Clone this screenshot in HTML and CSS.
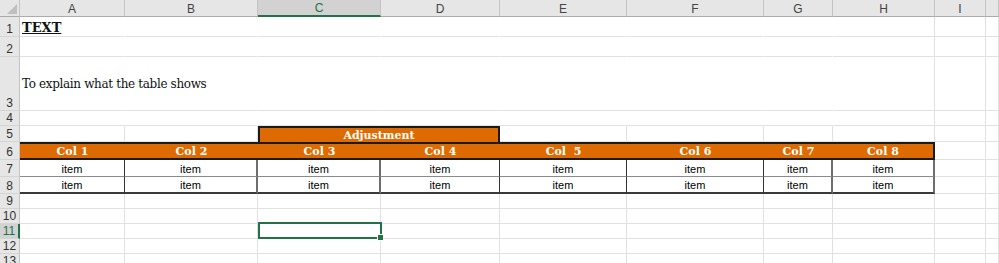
FILE: index.html
```html
<!DOCTYPE html>
<html lang="en">
<head>
    <meta charset="UTF-8">
    <title>Sheet1</title>
    <link rel="stylesheet" href="styles.css">
</head>
<body>
    <div class="sheet">
        <!-- column letters -->
        <div class="row hdr">
            <div class="c corner"><span class="tri"></span></div>
            <div class="c">A</div>
            <div class="c">B</div>
            <div class="c colsel">C</div>
            <div class="c">D</div>
            <div class="c">E</div>
            <div class="c">F</div>
            <div class="c">G</div>
            <div class="c">H</div>
            <div class="c">I</div>
            <div class="c"></div>
        </div>

        <div class="row h20 plain">
            <div class="c rowh">1</div>
            <div class="c txt title">TEXT</div>
            <div class="c"></div><div class="c"></div><div class="c"></div><div class="c"></div>
            <div class="c"></div><div class="c"></div><div class="c"></div><div class="c"></div><div class="c"></div>
        </div>
        <div class="row h20 plain">
            <div class="c rowh">2</div>
            <div class="c"></div><div class="c"></div><div class="c"></div><div class="c"></div><div class="c"></div>
            <div class="c"></div><div class="c"></div><div class="c"></div><div class="c"></div><div class="c"></div>
        </div>
        <div class="row h54 plain">
            <div class="c rowh">3</div>
            <div class="c txt mid">To explain what the table shows</div>
            <div class="c"></div><div class="c"></div><div class="c"></div><div class="c"></div>
            <div class="c"></div><div class="c"></div><div class="c"></div><div class="c"></div><div class="c"></div>
        </div>
        <div class="row h15 plain">
            <div class="c rowh">4</div>
            <div class="c"></div><div class="c"></div><div class="c"></div><div class="c"></div><div class="c"></div>
            <div class="c"></div><div class="c"></div><div class="c"></div><div class="c"></div><div class="c"></div>
        </div>

        <div class="row h16">
            <div class="c rowh">5</div>
            <div class="c"></div>
            <div class="c"></div>
            <div class="c adj">Adjustment</div>
            <div class="c"></div><div class="c"></div><div class="c"></div><div class="c"></div>
            <div class="c"></div><div class="c"></div>
        </div>

        <div class="row h18">
            <div class="c rowh">6</div>
            <div class="c th">Col 1</div>
            <div class="c th">Col 2</div>
            <div class="c th">Col 3</div>
            <div class="c th">Col 4</div>
            <div class="c th">Col&nbsp; 5</div>
            <div class="c th">Col 6</div>
            <div class="c th">Col 7</div>
            <div class="c th last">Col 8</div>
            <div class="c"></div><div class="c"></div>
        </div>

        <div class="row h17 data">
            <div class="c rowh">7</div>
            <div class="c td">item</div><div class="c td">item</div><div class="c td">item</div><div class="c td">item</div>
            <div class="c td">item</div><div class="c td">item</div><div class="c td">item</div><div class="c td">item</div>
            <div class="c"></div><div class="c"></div>
        </div>
        <div class="row h17 data lastrow">
            <div class="c rowh">8</div>
            <div class="c td">item</div><div class="c td">item</div><div class="c td">item</div><div class="c td">item</div>
            <div class="c td">item</div><div class="c td">item</div><div class="c td">item</div><div class="c td">item</div>
            <div class="c"></div><div class="c"></div>
        </div>

        <div class="row h15">
            <div class="c rowh">9</div>
            <div class="c"></div><div class="c"></div><div class="c"></div><div class="c"></div><div class="c"></div>
            <div class="c"></div><div class="c"></div><div class="c"></div><div class="c"></div><div class="c"></div>
        </div>
        <div class="row h15">
            <div class="c rowh">10</div>
            <div class="c"></div><div class="c"></div><div class="c"></div><div class="c"></div><div class="c"></div>
            <div class="c"></div><div class="c"></div><div class="c"></div><div class="c"></div><div class="c"></div>
        </div>
        <div class="row h15">
            <div class="c rowh rowsel">11</div>
            <div class="c"></div><div class="c"></div>
            <div class="c active"></div>
            <div class="c"></div><div class="c"></div>
            <div class="c"></div><div class="c"></div><div class="c"></div><div class="c"></div><div class="c"></div>
        </div>
        <div class="row h15">
            <div class="c rowh">12</div>
            <div class="c"></div><div class="c"></div><div class="c"></div><div class="c"></div><div class="c"></div>
            <div class="c"></div><div class="c"></div><div class="c"></div><div class="c"></div><div class="c"></div>
        </div>
        <div class="row h15">
            <div class="c rowh">13</div>
            <div class="c"></div><div class="c"></div><div class="c"></div><div class="c"></div><div class="c"></div>
            <div class="c"></div><div class="c"></div><div class="c"></div><div class="c"></div><div class="c"></div>
        </div>
    </div>
</body>
</html>
```

FILE: styles.css
```css
body {
    margin: 0;
    background-color: #fff;
    font-family: "Liberation Sans", Arial, sans-serif;
    overflow: hidden;
}
.row {
    display: grid;
    grid-template-columns: 20px 105px 133px 123px 119px 127px 137px 69px 102px 51px 1fr;
}
.c {
    box-sizing: border-box;
    border-right: 1px solid #e1e1e1;
    border-bottom: 1px solid #e1e1e1;
    display: flex;
    align-items: flex-end;
    justify-content: center;
    font-size: 11px;
    white-space: nowrap;
    color: #000;
}

/* row heights */
.hdr { height: 17px; }
.h20 { height: 20px; }
.h54 { height: 54px; }
.h18 { height: 18px; }
.h17 { height: 17px; }
.h16 { height: 16px; }
.h15 { height: 15px; }

/* column letters */
.hdr .c {
    background-color: #e6e6e6;
    border-right-color: #c4c4c4;
    border-bottom-color: #ababab;
    color: #444;
    font-size: 12px;
    align-items: center;
    padding-top: 1px;
}
.hdr .colsel {
    background-color: #d2d2d2;
    border-bottom: 2px solid #217346;
    color: #217346;
}
.corner {
    justify-content: flex-end;
    align-items: flex-end !important;
    padding: 0 2px 2px 0;
}
.tri {
    width: 10px;
    height: 10px;
    background-color: #bfbfbf;
    clip-path: polygon(100% 0, 100% 100%, 0 100%);
}

/* row numbers */
.rowh {
    background-color: #e6e6e6;
    border-right-color: #c4c4c4;
    border-bottom-color: #d4d4d4;
    color: #333;
    font-size: 12px;
    line-height: 14px;
}
.rowsel {
    background-color: #d2d2d2;
    color: #217346;
    border-right: 2px solid #217346;
}

/* rows 1-4: no vertical gridlines from A to G */
.plain .c:nth-child(n+2):nth-child(-n+8) {
    border-right-color: transparent;
}

.txt {
    justify-content: flex-start;
    padding-left: 2px;
    overflow: visible;
    font-family: "DejaVu Serif", Georgia, serif;
    color: #111;
}
.title {
    font-size: 13px;
    font-weight: bold;
    text-decoration: underline;
    padding-bottom: 1px;
}
.mid {
    font-size: 12px;
    letter-spacing: -0.35px;
    align-items: center;
    padding-top: 1px;
}

/* table header */
.adj {
    grid-column: span 2;
    background-color: #dd6b02;
    border: 2px solid #1a1a1a;
    border-bottom: none;
    color: #fff;
    font-family: "DejaVu Serif", Georgia, serif;
    font-weight: bold;
    font-size: 11px;
    align-items: center;
}
.th {
    background-color: #dd6b02;
    border-top: 2px solid #1a1a1a;
    border-bottom: 2px solid #1a1a1a;
    border-right: none;
    color: #fff;
    font-family: "DejaVu Serif", Georgia, serif;
    font-weight: bold;
    font-size: 11px;
    align-items: center;
}
.th.last {
    border-right: 2px solid #1a1a1a;
}

/* table body */
.td {
    border-right: 1px solid #333;
    border-bottom: 1px solid #8a8a8a;
    padding-bottom: 1px;
}
.data .td:nth-child(3),
.data .td:nth-child(4),
.data .td:nth-child(8),
.data .td:nth-child(9) {
    border-right: 2px solid #6e6e6e;
}
.lastrow .td {
    border-bottom: 2px solid #3a3a3a;
}

/* selected cell C11 */
.active {
    position: relative;
}
.active::after {
    content: "";
    position: absolute;
    top: -2px;
    left: 0;
    right: -2px;
    bottom: -1px;
    border: 2px solid #217346;
}
.active::before {
    content: "";
    position: absolute;
    right: -4px;
    bottom: -3px;
    width: 5px;
    height: 5px;
    background-color: #217346;
    border: 1px solid #fff;
    z-index: 1;
}
```
